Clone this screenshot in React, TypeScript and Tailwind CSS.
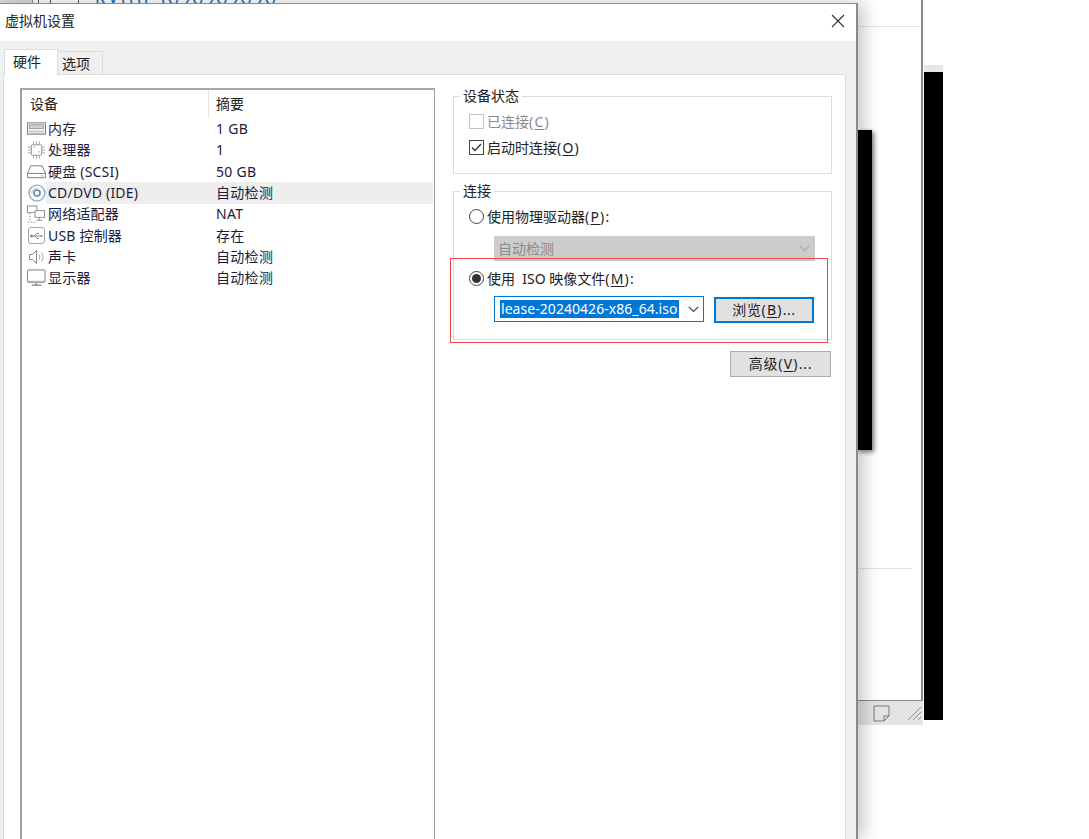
const FONT = "font-['Noto_Sans','Noto_Sans_CJK_SC',sans-serif]";

function MemoryIcon() {
  return (
    <svg width="20" height="14" viewBox="0 0 20 14" fill="none" stroke="#7d7d7d">
      <rect x="0.5" y="0.5" width="19" height="12" fill="#f2f2f2" />
      <rect x="2.5" y="2.5" width="15" height="4" fill="#cfcfcf" stroke="#a0a0a0" />
      <path d="M2 9.5h16M2 11.5h16" stroke="#b5b5b5" />
    </svg>
  );
}

function CpuIcon() {
  return (
    <svg width="20" height="20" viewBox="0 0 20 20" fill="none" stroke="#8a8a8a">
      <rect x="4.5" y="4.5" width="11" height="11" rx="1.5" fill="#fff" />
      <path d="M7 1v3M10 1v3M13 1v3M7 16v3M10 16v3M13 16v3M1 7h3M1 10h3M1 13h3M16 7h3M16 10h3M16 13h3" stroke="#a5a5a5" />
      <path d="M7 7h1M12 12h1" stroke="#555" />
    </svg>
  );
}

function DiskIcon() {
  return (
    <svg width="20" height="16" viewBox="0 0 20 16" fill="none" stroke="#7a7a7a">
      <path d="M4 1.5h12l3.5 8v4.5h-19V9.500z" fill="#fff" />
      <path d="M0.500 9.500h19" />
      <path d="M15 12h2" stroke="#aaa" />
    </svg>
  );
}

function DiscIcon() {
  return (
    <svg width="18" height="18" viewBox="0 0 18 18" fill="none">
      <circle cx="9" cy="9" r="8" fill="#f5f8fa" stroke="#7f9fb5" strokeWidth="1.2" />
      <circle cx="9" cy="9" r="3" fill="#fff" stroke="#5f8aa8" strokeWidth="1.500" />
      <path d="M4 9a5 5 0 0 1 5-5" stroke="#b9ccd9" />
    </svg>
  );
}

function NetworkIcon() {
  return (
    <svg width="20" height="19" viewBox="0 0 20 19" fill="none" stroke="#8a8a8a">
      <rect x="0.500" y="0.500" width="10" height="7" fill="#fff" />
      <rect x="8.500" y="5.500" width="10" height="7" fill="#fff" />
      <path d="M13 13v2M10 15.500h6" />
      <path d="M3 8v8M1 17.500h8" strokeDasharray="1.500 1.500" />
    </svg>
  );
}

function UsbIcon() {
  return (
    <svg width="18" height="18" viewBox="0 0 18 18" fill="none" stroke="#8a8a8a">
      <rect x="0.500" y="0.500" width="16" height="16" rx="2.500" fill="#fff" stroke="#a5a5a5" />
      <path d="M3.500 9h10M6 9l2.500-2.500H11M7 9l2 2.500h2" />
      <circle cx="3.500" cy="9" r="1" fill="#8a8a8a" />
      <path d="M13.500 8v2" strokeWidth="1.500" />
    </svg>
  );
}

function SpeakerIcon() {
  return (
    <svg width="16" height="14" viewBox="0 0 16 14" fill="none" stroke="#8a8a8a">
      <path d="M0.500 4.500h3l4-4v13l-4-4h-3z" fill="#fff" />
      <path d="M10 4.500a4 4 0 0 1 0 5M12.500 2.500a7 7 0 0 1 0 9" stroke="#a8a8a8" />
    </svg>
  );
}

function MonitorIcon() {
  return (
    <svg width="20" height="18" viewBox="0 0 20 18" fill="none" stroke="#7a7a7a">
      <rect x="0.500" y="0.500" width="18.500" height="13" rx="1" fill="#fff" />
      <path d="M1 12.500h18" stroke="#b0b0b0" />
      <path d="M9.750 14v2M5 16.500h10" strokeWidth="1.200" />
    </svg>
  );
}

const rows = [
  { icon: <MemoryIcon />, name: "内存", summary: "1 GB" },
  { icon: <CpuIcon />, name: "处理器", summary: "1" },
  { icon: <DiskIcon />, name: "硬盘 (SCSI)", summary: "50 GB" },
  { icon: <DiscIcon />, name: "CD/DVD (IDE)", summary: "自动检测", selected: true },
  { icon: <NetworkIcon />, name: "网络适配器", summary: "NAT" },
  { icon: <UsbIcon />, name: "USB 控制器", summary: "存在" },
  { icon: <SpeakerIcon />, name: "声卡", summary: "自动检测" },
  { icon: <MonitorIcon />, name: "显示器", summary: "自动检测" },
];

function DeviceList() {
  return (
    <div className="w-[415px] h-[760px] mt-[13px] ml-[16px] shrink-0 border-2 border-[#a0a0a0] border-r border-b-0 border-r-[#9a9a9a] border-t-[#a8a8a8] bg-white">
      <div className="flex h-[28.4px] text-[14px] text-[#222] items-start">
        <div className="w-[187px] h-[28px] pl-[8px] border-r border-[#e5e5e5] leading-[27px]">设备</div>
        <div className="pl-[7px] h-[28px] leading-[27px]">摘要</div>
      </div>
      <div className="flex flex-col">
        {rows.map((r) => (
          <div key={r.name} className="flex h-[21.3px] items-center text-[14px] text-[#1c1c3a]">
            <div className="w-[19px] ml-[5px] shrink-0 flex justify-center items-center">{r.icon}</div>
            <div className={`flex flex-1 h-full items-center leading-none mr-[1px] ${r.selected ? "bg-[#eeeeee]" : ""}`}>
              <span className="w-[170px] pl-[2px] whitespace-nowrap tracking-[0.2px]">{r.name}</span>
              <span className="tracking-[0.3px]">{r.summary}</span>
            </div>
          </div>
        ))}
      </div>
    </div>
  );
}

function Group({ title, className, children }: { title: string; className: string; children: React.ReactNode }) {
  return (
    <div className={`relative border border-[#dcdcdc] bg-white ${className}`}>
      <span className="absolute -top-[10px] left-[6px] bg-white px-[3px] text-[14px] leading-[18px] text-[#222]">{title}</span>
      {children}
    </div>
  );
}

function Key({ k }: { k: string }) {
  return (
    <span className="tracking-[1.2px]">
      (<span className="underline underline-offset-2">{k}</span>)
    </span>
  );
}

function Radio({ checked }: { checked?: boolean }) {
  return (
    <span className="w-[15px] h-[15px] rounded-full border border-[#444] bg-white flex items-center justify-center shrink-0">
      {checked && <span className="w-[9px] h-[9px] rounded-full bg-[#333]" />}
    </span>
  );
}

function Chevron({ color }: { color: string }) {
  return (
    <svg width="11" height="7" viewBox="0 0 11 7" fill="none" stroke={color} strokeWidth="1.200">
      <path d="M0.800 0.800 5.500 5.500 10.200 0.800" />
    </svg>
  );
}

function SettingsPane() {
  return (
    <div className="ml-[18px] mt-[21px] w-[379px] flex flex-col">
      <Group title="设备状态" className="h-[78px] pl-[15px] pt-[14px]">
        <div className="flex items-center gap-[3px] h-[20px] text-[14px] text-[#8b8b8b]">
          <span className="w-[15px] h-[15px] border border-[#c4c4c4] bg-white" />
          <span>已连接<Key k="C" /></span>
        </div>
        <div className="flex items-center gap-[3px] h-[20px] mt-[6px] text-[14px] text-[#222]">
          <span className="w-[15px] h-[15px] border border-[#444] bg-white flex items-center justify-center">
            <svg width="11" height="9" viewBox="0 0 11 9" fill="none" stroke="#333" strokeWidth="1.300">
              <path d="M1 4.500 4 7.500 10 1" />
            </svg>
          </span>
          <span>启动时连接<Key k="O" /></span>
        </div>
      </Group>
      <Group title="连接" className="h-[149px] mt-[17px] pl-[15px] pt-[14px] text-[14px] text-[#222]">
        <div className="flex items-center gap-[3px] h-[20px]">
          <Radio />
          <span>使用物理驱动器<Key k="P" />:</span>
        </div>
        <div className="mt-[10px] ml-[25px] w-[321px] h-[25px] bg-[#cccccc] flex items-center justify-between pl-[4px] pr-[5px] text-[#8a8a8a] leading-none">
          自动检测
          <Chevron color="#a8a8a8" />
        </div>
        <div className="flex items-center gap-[3px] h-[20px] mt-[7px]">
          <Radio checked />
          <span className="whitespace-pre">使用  ISO 映像文件<Key k="M" />:</span>
        </div>
        <div className="flex items-start mt-[8px] ml-[25px]">
          <div className="w-[210px] h-[26px] border border-[#0078d7] bg-white flex items-center justify-between pl-[5px] pr-[4px]">
            <span className="bg-[#0078d7] text-white h-[18px] leading-[18px] text-[14px] px-[1px] tracking-[0.05px] whitespace-nowrap">lease-20240426-x86_64.iso</span>
            <Chevron color="#444" />
          </div>
          <div className="ml-[10px] mt-[1px] w-[100px] h-[26px] border-2 border-[#0078d7] bg-[#e1e1e1] flex items-center justify-center leading-none tracking-[0.6px]">
            <span>浏览<Key k="B" />...</span>
          </div>
        </div>
      </Group>
      <div className="self-end mt-[11px] mr-[1px] w-[101px] h-[26px] border border-[#adadad] bg-[#e1e1e1] flex items-center justify-center text-[14px] text-[#222] leading-none tracking-[0.8px]">
        <span>高级<Key k="V" />...</span>
      </div>
    </div>
  );
}

function Dialog() {
  return (
    <div className="absolute left-0 top-[3px] w-[858px] h-[836px] flex flex-col bg-[#f0f0f0] border-t border-r-2 border-t-[#8a8a8a] border-r-[#8a8a8a] shadow-[6px_0_16px_rgba(0,0,0,0.22)]">
      <div className="h-[37px] shrink-0 bg-white flex items-center justify-between pl-[5px] pr-[11px] pb-[4px] text-[14px] text-[#222]">
        虚拟机设置
        <svg width="14" height="14" viewBox="0 0 14 14" stroke="#333" strokeWidth="1.100">
          <path d="M1 1 13 13M13 1 1 13" />
        </svg>
      </div>
      <div className="flex items-end h-[33px] shrink-0 pl-[4px] text-[14px] text-[#222]">
        <div className="w-[54px] h-[26px] pl-[8px] pb-[3px] bg-white border border-b-0 border-[#dcdcdc] flex items-center relative z-10 -mb-px">硬件</div>
        <div className="w-[45px] h-[23px] pl-[4px] bg-[#f0f0f0] border border-b-0 border-l-0 border-[#dcdcdc] flex items-center">选项</div>
      </div>
      <div className="ml-[3px] w-[843px] flex-1 bg-white border border-b-0 border-[#dcdcdc] flex">
        <DeviceList />
        <SettingsPane />
      </div>
    </div>
  );
}

export default function App() {
  return (
    <div className={`relative w-[1089px] h-[839px] overflow-hidden bg-white ${FONT}`}>
      {/* window behind the dialog */}
      <div className="absolute left-0 top-0 w-[33px] h-[3px] bg-[#d8d8d8] border-r border-[#8a8a8a]" />
      <div className="absolute left-[38px] top-0 w-px h-[3px] bg-[#555]" />
      <div className="absolute left-[50px] top-0 w-px h-[3px] bg-[#555]" />
      <div className="absolute left-[78px] top-0 w-px h-[3px] bg-[#555]" />
      <div className="absolute left-[95px] -top-[11px] text-[19px] leading-[14px] tracking-[3px] text-[#1f6fb5]">kylin-R/X/X/X/X/</div>
      <div className="absolute left-[858px] top-[26px] w-[64px] h-px bg-[#e4e4e4]" />
      <div className="absolute left-[858px] top-[568px] w-[54px] h-px bg-[#e4e4e4]" />
      <div className="absolute left-[857px] top-[130px] w-[15px] h-[320px] bg-black shadow-[2px_2px_5px_rgba(0,0,0,0.55)]" />
      <div className="absolute left-[921px] top-0 w-[2px] h-[701px] bg-[#8a8a8a]" />
      <div className="absolute left-[857px] top-[700px] w-[66px] h-[25px] bg-[#e3e4e6] border-t border-[#8a8a8a] flex items-center justify-end">
        <svg width="17" height="17" viewBox="0 0 17 17" fill="none" stroke="#777" className="mr-[16px]">
          <path d="M1 1h15v10l-5 5H1zM11 16v-5h5" />
        </svg>
        <svg width="16" height="16" viewBox="0 0 16 16" fill="none" stroke="#8c8c8c" className="mr-[1px]">
          <path d="M2 15 15 2M7 15 15 7M12 15l3-3" />
        </svg>
      </div>
      <div className="absolute left-[924px] top-[65px] w-[19px] h-[7px] bg-[#e6e6e6]" />
      <div className="absolute left-[924px] top-[72px] w-[19px] h-[648px] bg-black" />
      <Dialog />
      {/* red highlight drawn over the screenshot */}
      <div className="absolute left-[450px] top-[258px] w-[378px] h-[85px] border border-[#f04a4a]" />
    </div>
  );
}
